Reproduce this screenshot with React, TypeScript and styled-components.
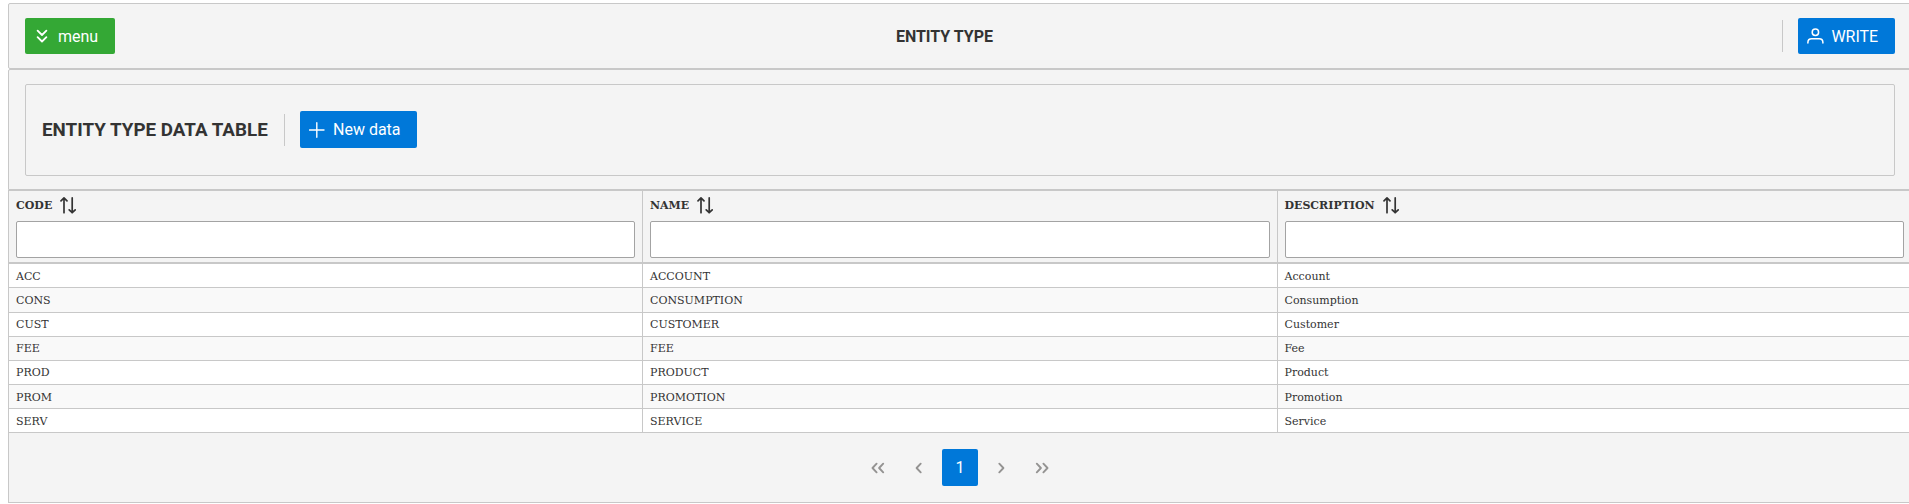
import React from "react";
import styled, { createGlobalStyle } from "styled-components";

const line = "#c8c8c8";
const surface = "#f4f4f4";
const ink = "#333333";

const GlobalStyle = createGlobalStyle`
  *, *::before, *::after { box-sizing: border-box; }
  html, body { margin: 0; overflow: hidden; background: #fff; }
  body { font-family: Roboto, sans-serif; font-size: 16px; color: ${ink}; }
`;

const Page = styled.main`
  width: 1904px;
  margin: 3px 0 0 8px;
`;

const TopBar = styled.header`
  display: grid;
  grid-template-columns: 1fr auto 1fr;
  align-items: center;
  height: 66px;
  padding: 0 16px;
  background: ${surface};
  border: 1px solid ${line};
  border-radius: 2px;
`;

const PageTitle = styled.h1`
  margin: 0;
  padding: 1px 31px 0 0;
  font-size: 16px;
  line-height: 20px;
  font-weight: 700;
`;

const Actions = styled.div`
  display: flex;
  align-items: center;
  justify-content: flex-end;
`;

const Divider = styled.span<{ $before: number; $after: number }>`
  width: 1px;
  height: 32px;
  margin: 0 ${(p) => p.$after}px 0 ${(p) => p.$before}px;
  background: ${line};
`;

const Button = styled.button<{ $tone: "green" | "blue"; $width: number; $height: number; $gap: number }>`
  display: flex;
  align-items: center;
  justify-content: flex-start;
  gap: ${(p) => p.$gap}px;
  width: ${(p) => p.$width}px;
  height: ${(p) => p.$height}px;
  padding: 0 0 0 9px;
  border: 0;
  border-radius: 2px;
  background: ${(p) => (p.$tone === "green" ? "#34a835" : "#0078d9")};
  color: #fff;
  font: 400 16px/20px Roboto, sans-serif;
  white-space: nowrap;
`;

const Label = styled.span`
  padding-top: 1px;
`;

const Icon = styled.svg`
  flex: none;
  display: block;
  fill: none;
  stroke: currentColor;
  stroke-linecap: round;
  stroke-linejoin: round;
`;

const TableBox = styled.section`
  height: 121px;
  padding: 14px 16px 0;
  background: ${surface};
  border: 1px solid ${line};
  border-radius: 2px 2px 0 0;
`;

const Toolbar = styled.div`
  display: flex;
  align-items: center;
  height: 92px;
  padding: 0 16px 1px;
  border: 1px solid ${line};
  border-radius: 2px;
`;

const TableTitle = styled.h2`
  margin: 0;
  width: 226px;
  padding-top: 1px;
  font-size: 18.8px;
  line-height: 24px;
  font-weight: 700;
  white-space: nowrap;
`;

const Table = styled.table`
  width: 1904px;
  table-layout: fixed;
  border-collapse: separate;
  border-spacing: 0;
  border-left: 1px solid ${line};
  font-family: "DejaVu Serif", serif;
  font-size: 11px;
`;

const HeadCell = styled.th`
  height: 74px;
  padding: 0 7px;
  vertical-align: top;
  text-align: left;
  background: ${surface};
  border-top: 1px solid ${line};
  border-right: 1px solid ${line};
  border-bottom: 2px solid ${line};
`;

const HeadLabel = styled.div`
  display: flex;
  align-items: center;
  gap: 8px;
  height: 30px;
  line-height: 14px;

  ${HeadCell}:last-child & {
    margin-left: -0.5px;
  }

  svg {
    margin-bottom: 2px;
  }
`;

const Filter = styled.input`
  display: block;
  width: 100%;
  height: 37px;
  padding: 7px;
  border: 1px solid #a3a3a3;
  border-radius: 2px;
  background: #fff;
`;

const Row = styled.tr<{ $height: number; $striped: boolean }>`
  height: ${(p) => p.$height}px;
  background: ${(p) => (p.$striped ? "#f9f9f9" : "#fff")};
`;

const Cell = styled.td<{ $low: boolean }>`
  padding: ${(p) => (p.$low ? 2 : 0)}px 7px 0;
  line-height: 14px;
  vertical-align: middle;
  border-right: 1px solid ${line};
  border-bottom: 1px solid ${line};

  &:last-child {
    padding-left: 6.5px;
  }
`;

const Paginator = styled.nav`
  display: flex;
  align-items: center;
  justify-content: center;
  gap: 5.2px;
  height: 70px;
  background: ${surface};
  border: 1px solid ${line};
  border-top: 0;
`;

const PageButton = styled.button<{ $active?: boolean }>`
  display: flex;
  align-items: center;
  justify-content: center;
  width: 36px;
  height: 37px;
  padding: 0;
  border: 0;
  border-radius: 2px;
  font: 400 16px/20px Roboto, sans-serif;
  background: ${(p) => (p.$active ? "#0078d9" : "transparent")};
  color: ${(p) => (p.$active ? "#fff" : "#949392")};
`;

const SortIcon = () => (
  <Icon width="16" height="17" viewBox="0 0 16 17" strokeWidth="1.7">
    <path d="M4 15.7V.9M1 3.8L4 .9l3 2.9M12.2 .9v14.8M9.2 12.8l3 2.9 3-2.9" />
  </Icon>
);

const Chevron = ({ double = false, flip = false }: { double?: boolean; flip?: boolean }) => (
  <Icon width="14" height="14" viewBox="0 0 14 14" strokeWidth="1.9">
    <g transform={flip ? "translate(14 0) scale(-1 1)" : undefined}>
      <path d={double ? "M5.6 2.7L1.5 7l4.1 4.3M12.2 2.7L8.1 7l4.1 4.3" : "M8.7 2.7L4.6 7l4.1 4.3"} />
    </g>
  </Icon>
);

const columns = ["CODE", "NAME", "DESCRIPTION"];
const rows = [
  { cells: ["ACC", "ACCOUNT", "Account"], low: true },
  { cells: ["CONS", "CONSUMPTION", "Consumption"], low: true },
  { cells: ["CUST", "CUSTOMER", "Customer"], low: false },
  { cells: ["FEE", "FEE", "Fee"], low: false },
  { cells: ["PROD", "PRODUCT", "Product"], low: false },
  { cells: ["PROM", "PROMOTION", "Promotion"], low: true },
  { cells: ["SERV", "SERVICE", "Service"], low: true },
];

export default function App() {
  return (
    <>
      <GlobalStyle />
      <Page>
        <TopBar>
          <div>
            <Button $tone="green" $width={90} $height={36} $gap={8}>
              <Icon width="16" height="16" viewBox="0 0 16 16" strokeWidth="1.8">
                <path d="M3.6 2.7L8 7l4.4-4.3M3.6 9.2L8 13.5l4.4-4.3" />
              </Icon>
              <Label>menu</Label>
            </Button>
          </div>
          <PageTitle>ENTITY TYPE</PageTitle>
          <Actions>
            <Divider $before={0} $after={15} />
            <Button $tone="blue" $width={97} $height={36} $gap={7.4}>
              <Icon width="17" height="16" viewBox="0 0 17 16" strokeWidth="1.5">
                <circle cx="8.4" cy="4.3" r="3.2" />
                <path d="M.9 15v-.6c0-2.2 1.6-3.7 3.8-3.7h7.4c2.2 0 3.8 1.5 3.8 3.7v.6" />
              </Icon>
              <Label>WRITE</Label>
            </Button>
          </Actions>
        </TopBar>
        <TableBox>
          <Toolbar>
            <TableTitle>ENTITY TYPE DATA TABLE</TableTitle>
            <Divider $before={16} $after={15} />
            <Button $tone="blue" $width={117} $height={37} $gap={8}>
              <Icon width="16" height="16" viewBox="0 0 16 16" strokeWidth="1.4">
                <path d="M7.8.8v14.4M.6 8H15" />
              </Icon>
              New data
            </Button>
          </Toolbar>
        </TableBox>
        <Table>
          <colgroup>
            <col style={{ width: 634 }} />
            <col style={{ width: 635 }} />
            <col />
          </colgroup>
          <thead>
            <tr>
              {columns.map((name) => (
                <HeadCell key={name}>
                  <HeadLabel>
                    {name}
                    <SortIcon />
                  </HeadLabel>
                  <Filter aria-label={name} />
                </HeadCell>
              ))}
            </tr>
          </thead>
          <tbody>
            {rows.map(({ cells, low }, index) => (
              <Row key={cells[0]} $height={index === 1 ? 25 : 24} $striped={index % 2 === 1}>
                {cells.map((text, column) => (
                  <Cell key={column} $low={low}>{text}</Cell>
                ))}
              </Row>
            ))}
          </tbody>
        </Table>
        <Paginator>
          <PageButton aria-label="First"><Chevron double /></PageButton>
          <PageButton aria-label="Previous"><Chevron /></PageButton>
          <PageButton $active>1</PageButton>
          <PageButton aria-label="Next"><Chevron flip /></PageButton>
          <PageButton aria-label="Last"><Chevron double flip /></PageButton>
        </Paginator>
      </Page>
    </>
  );
}
